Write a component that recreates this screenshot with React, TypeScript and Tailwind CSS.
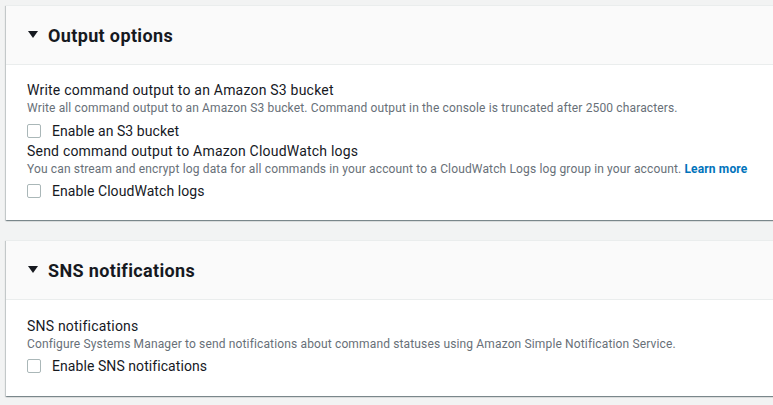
import React from 'react';

// 折りたたみ可能なパネル
function Panel({ title, children }: { title: string; children: React.ReactNode }) {
  return (
    <div className="bg-white border-t border-[#eaeded] shadow-[0_1px_1px_0_rgba(0,28,36,0.3),1px_1px_1px_0_rgba(0,28,36,0.15),-1px_1px_1px_0_rgba(0,28,36,0.15)]">
      <div className="h-[59px] bg-[#fafafa] border-b border-[#eaeded] flex items-center pl-[22px]">
        <svg width="10" height="8" viewBox="0 0 10 8" className="mr-[10px]">
          <polygon points="0,0 10,0 5,7" fill="#16191f" />
        </svg>
        <h2 className="text-[18px] font-bold tracking-[0.02em] text-[#16191f]">{title}</h2>
      </div>
      {children}
    </div>
  );
}

function Checkbox({ label }: { label: string }) {
  return (
    <label className="flex items-center h-[20px]">
      <span className="w-[14px] h-[14px] border border-[#aab7b8] rounded-[2px] bg-white mr-[11px]" />
      <span className="text-[14px] tracking-[0.005em] text-[#16191f]">{label}</span>
    </label>
  );
}

function Field({ title, desc, gap, children }: { title: string; desc: React.ReactNode; gap: string; children: React.ReactNode }) {
  return (
    <div>
      <div className="text-[14px] leading-[20px] tracking-[0.015em] text-[#16191f]">{title}</div>
      <div className="text-[12px] leading-[16px] tracking-[0.012em] text-[#687078]">{desc}</div>
      <div className={gap}>{children}</div>
    </div>
  );
}

export default function App() {
  return (
    <div
      className="min-h-[405px] bg-[#f2f3f3] overflow-hidden pt-[5px] pl-[6px]"
      style={{ fontFamily: 'Roboto, "Noto Sans", Arial, sans-serif' }}
    >
      <div className="w-[820px] flex flex-col gap-[20px]">
        <Panel title="Output options">
          <div className="pl-[21px] pt-[15px] pb-[19px]">
            <Field
              gap="mt-[5px]"
              title="Write command output to an Amazon S3 bucket"
              desc="Write all command output to an Amazon S3 bucket. Command output in the console is truncated after 2500 characters."
            >
              <Checkbox label="Enable an S3 bucket" />
            </Field>
            <Field
              gap="mt-[4px]"
              title="Send command output to Amazon CloudWatch logs"
              desc={
                <>
                  You can stream and encrypt log data for all commands in your account to a CloudWatch Logs log group in your account.{' '}
                  <a className="font-bold text-[#0073bb]">Learn more</a>
                </>
              }
            >
              <Checkbox label="Enable CloudWatch logs" />
            </Field>
          </div>
        </Panel>
        <Panel title="SNS notifications">
          <div className="pl-[21px] pt-[16px] pb-[20px]">
            <Field
              gap="mt-[4px]"
              title="SNS notifications"
              desc="Configure Systems Manager to send notifications about command statuses using Amazon Simple Notification Service."
            >
              <Checkbox label="Enable SNS notifications" />
            </Field>
          </div>
        </Panel>
      </div>
    </div>
  );
}
